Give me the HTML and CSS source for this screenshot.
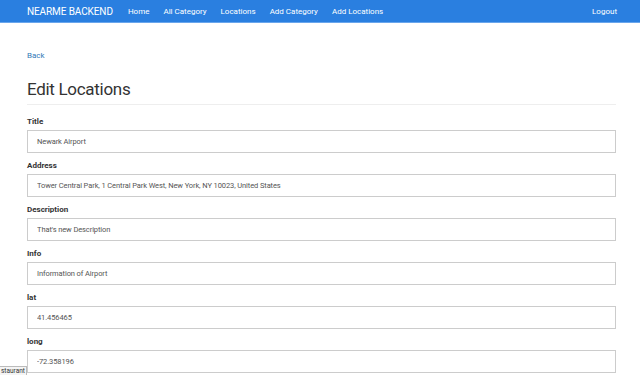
FILE: index.html
```html
<!DOCTYPE html>
<html lang="en">
<head>
    <meta charset="UTF-8">
    <meta name="viewport" content="width=device-width, initial-scale=1.0">
    <title>NEARME BACKEND - Edit Locations</title>
    <link rel="stylesheet" href="styles.css">
</head>
<body>
    <nav class="navbar">
        <a class="brand" href="#">NEARME BACKEND</a>
        <ul class="nav">
            <li><a href="#">Home</a></li>
            <li><a href="#">All Category</a></li>
            <li><a href="#">Locations</a></li>
            <li><a href="#">Add Category</a></li>
            <li><a href="#">Add Locations</a></li>
        </ul>
        <ul class="nav nav-right">
            <li><a href="#">Logout</a></li>
        </ul>
    </nav>

    <div class="container">
        <a class="back" href="#">Back</a>
        <h1 class="page-header">Edit Locations</h1>

        <form class="form">
            <div class="form-group">
                <label for="title">Title</label>
                <input class="form-control" id="title" type="text" value="Newark Airport">
            </div>
            <div class="form-group">
                <label for="address">Address</label>
                <input class="form-control" id="address" type="text" value="Tower Central Park, 1 Central Park West, New York, NY 10023, United States">
            </div>
            <div class="form-group">
                <label for="description">Description</label>
                <input class="form-control" id="description" type="text" value="That's new Description">
            </div>
            <div class="form-group">
                <label for="info">Info</label>
                <input class="form-control" id="info" type="text" value="Information of Airport">
            </div>
            <div class="form-group">
                <label for="lat">lat</label>
                <input class="form-control" id="lat" type="text" value="41.456465">
            </div>
            <div class="form-group">
                <label for="long">long</label>
                <input class="form-control" id="long" type="text" value="-72.358196">
            </div>
        </form>
    </div>

    <div class="status">staurant</div>
</body>
</html>
```

FILE: styles.css
```css
body {
    font-family: Roboto, "Open Sans", sans-serif;
    margin: 0;
    background-color: #fff;
    color: #333;
    overflow: hidden;
}
a {
    text-decoration: none;
}
.navbar {
    display: flex;
    align-items: center;
    height: 22px;
    padding: 0 0 0 27px;
    background-color: #2a7fe0;
    border-bottom: 1px solid #6aa6ec;
}
.brand {
    color: #fff;
    font-size: 10px;
    letter-spacing: -0.1px;
    margin-right: 8px;
}
.nav {
    display: flex;
    list-style: none;
    margin: 0;
    padding: 0;
}
.nav a {
    display: block;
    color: #fff;
    font-size: 8px;
    padding: 0 7px;
}
.nav-right {
    margin-left: auto;
    margin-right: 16px;
}
.container {
    margin: 0 24px 0 27px;
    padding-top: 27px;
}
.back {
    display: block;
    color: #337ab7;
    font-size: 8px;
    line-height: 12px;
}
.page-header {
    font-size: 17px;
    font-weight: 400;
    letter-spacing: -0.3px;
    margin: 14px 0 0;
    line-height: 26px;
    padding-bottom: 2px;
    border-bottom: 1px solid #eee;
    color: #333;
}
.form {
    margin-top: 12px;
}
.form-group {
    margin-bottom: 8px;
}
.form-group label {
    display: block;
    font-size: 8px;
    font-weight: 700;
    line-height: 10px;
    margin-bottom: 3px;
    color: #333;
}
.form-control {
    display: block;
    box-sizing: border-box;
    width: 100%;
    height: 23px;
    padding: 0 9px;
    font-family: inherit;
    font-size: 7.5px;
    letter-spacing: -0.1px;
    color: #555;
    border: 1px solid #ccc;
    border-radius: 0;
    background-color: #fff;
}
.status {
    position: fixed;
    left: 0;
    bottom: 0;
    padding: 0 1px;
    font-size: 6.5px;
    line-height: 8px;
    color: #333;
    background-color: #f4f4f4;
    border: 1px solid #bbb;
    border-bottom: none;
    border-left: none;
}
```
